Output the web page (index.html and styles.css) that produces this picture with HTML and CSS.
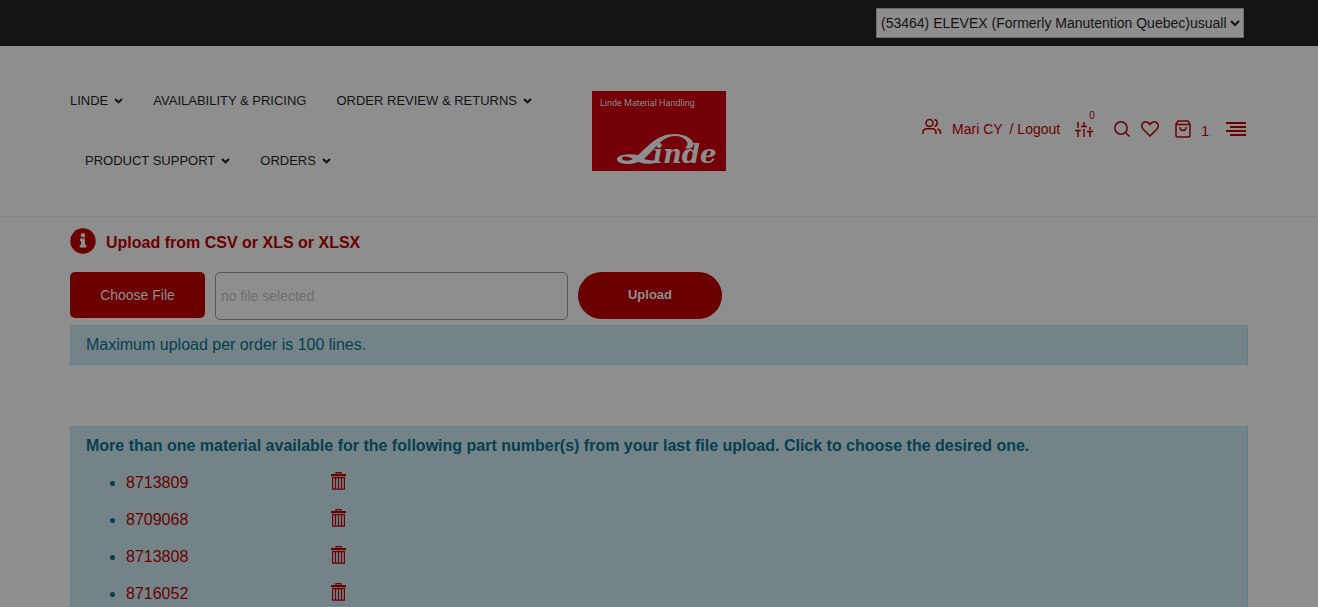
FILE: index.html
```html
<!DOCTYPE html>
<html lang="en">
<head>
<meta charset="utf-8">
<meta name="viewport" content="width=device-width, initial-scale=1">
<title>Linde Material Handling - File upload</title>
<link rel="stylesheet" href="styles.css">
</head>
<body>
<svg class="sprite" aria-hidden="true">
  <symbol id="chevron" viewBox="0 0 9 6"><path d="M1 1l3.5 3.3L8 1" fill="none" stroke="currentColor" stroke-width="2"/></symbol>
  <symbol id="trash" viewBox="0 0 15 18"><path d="M5 2.5V.7h5v1.8" fill="none" stroke="currentColor" stroke-width="1.2"/><path d="M0 2h15v2.2H0z" fill="currentColor"/><path d="M1.6 5.6h11.8v11.6H1.6zM4.5 5.5v11.5M7.5 5.5v11.5M10.5 5.5v11.5" fill="none" stroke="currentColor" stroke-width="1.2"/></symbol>
</svg>
<div class="topbar">
  <select class="account" aria-label="Account">
    <option>(53464) ELEVEX (Formerly Manutention Quebec)usuall</option>
  </select>
</div>
<header class="header">
  <nav class="nav" aria-label="Main">
    <a class="nav-item" href="#">LINDE <svg class="chevron"><use href="#chevron"/></svg></a>
    <a class="nav-item" href="#">AVAILABILITY &amp; PRICING</a>
    <a class="nav-item" href="#">ORDER REVIEW &amp; RETURNS <svg class="chevron"><use href="#chevron"/></svg></a>
    <a class="nav-item" href="#">PRODUCT SUPPORT <svg class="chevron"><use href="#chevron"/></svg></a>
    <a class="nav-item" href="#">ORDERS <svg class="chevron"><use href="#chevron"/></svg></a>
  </nav>
  <a class="logo" href="#" aria-label="Linde Material Handling">
    <svg width="134" height="80" viewBox="0 0 134 80">
      <rect width="134" height="80" fill="#720006"/>
      <text class="logo-caption" x="8" y="15">Linde Material Handling</text>
      <g fill="#8e8e8e">
        <path d="M46 64L58 53C66 46 74 43 82 43C93 43 103 48 101 55C100 58 96 58 93 57C97 54 96 50 91 47C84 43 76 46 71 49C67 52 64 55 61 59L52 68C56 69 60 70 65 69L63 72C55 74 50 72 46 71C40 74 27 74 25 69C24 64 36 62 46 64ZM41 68C36 65 30 65 30 67C30 70 36 71 41 68Z" fill-rule="evenodd"/>
      </g>
      <text class="logo-word" x="61" y="72">inde</text>
    </svg>
  </a>
  <div class="tools">
    <a class="tool user" href="#" aria-label="Account"><svg width="20" height="18" viewBox="0 0 20 18" fill="none" stroke="currentColor" stroke-width="1.500"><circle cx="7.500" cy="5" r="3.500"/><path d="M1 16v-1.500C1 12 2.500 10.700 5 10.700h5c2.500 0 4 1.300 4 3.800V16M12.500 1.600c3.600.9 3.600 5.900 0 6.800M15.500 11c2 .5 3 1.700 3 3.600V16"/></svg></a>
    <a class="tool name" href="#">Mari CY</a>
    <a class="tool logout" href="#">/ Logout</a>
    <a class="tool compare" href="#" aria-label="Compare"><svg width="18" height="17" viewBox="0 0 18 17" fill="none" stroke="currentColor" stroke-width="1.500"><path d="M3 1v6M0 9.500h6M3 9.500V16M9 1v4.500M6 5.500h6M9 8v8M15 6v3M12 10.500h6M15 10.500V16"/></svg><span class="count">0</span></a>
    <a class="tool search" href="#" aria-label="Search"><svg width="16" height="16" viewBox="0 0 16 16" fill="none" stroke="currentColor" stroke-width="1.500"><circle cx="7" cy="7" r="6.200"/><path d="M11.500 11.500L15.500 15.500"/></svg></a>
    <a class="tool heart" href="#" aria-label="Wish list"><svg width="18" height="16" viewBox="0 0 18 16" fill="none" stroke="currentColor" stroke-width="1.500"><path d="M9 15L2.200 8.200C.3 6.200.4 3.400 2.100 1.900C4 .2 6.900.7 8.200 2.500L9 3.500L9.800 2.500C11.100.7 14 .2 15.900 1.900C17.600 3.400 17.700 6.200 15.800 8.200Z"/></svg></a>
    <a class="tool bag" href="#"><svg width="16" height="18" viewBox="0 0 16 18" fill="none" stroke="currentColor" stroke-width="1.500"><path d="M3 1h10l2 3v11.200c0 1-.6 1.800-1.700 1.800H2.700C1.600 17 1 16.200 1 15.200V4zM1 4.500h14M5 7c0 4.600 6 4.600 6 0"/></svg><span class="bag-count">1</span></a>
    <button class="tool menu" type="button" aria-label="Menu"><svg width="20" height="14" viewBox="0 0 20 14" fill="none" stroke="currentColor" stroke-width="2"><path d="M0 1h20M4 5h16M0 9h20M4 13h16"/></svg></button>
  </div>
</header>
<main class="main">
  <h1 class="title"><svg width="26" height="26" viewBox="0 0 26 26"><circle cx="13" cy="13" r="12.700" fill="currentColor"/><circle cx="13" cy="7.200" r="2.200" fill="#8e8e8e"/><path d="M10 10.500h5v6.500h1.300v2.500H9.700V17H11v-4h-1z" fill="#8e8e8e"/></svg><span>Upload from CSV or XLS or XLSX</span></h1>
  <form class="upload">
    <button class="choose" type="button">Choose File</button>
    <input class="filename" type="text" placeholder="no file selected" aria-label="Selected file" readonly>
    <button class="submit" type="button">Upload</button>
  </form>
  <p class="alert limit">Maximum upload per order is 100 lines.</p>
  <section class="alert materials">
    <h2 class="materials-title">More than one material available for the following part number(s) from your last file upload. Click to choose the desired one.</h2>
    <ul class="parts">
      <li><div class="part"><a href="#">8713809</a><button type="button" aria-label="Delete 8713809"><svg width="15" height="18"><use href="#trash"/></svg></button></div></li>
      <li><div class="part"><a href="#">8709068</a><button type="button" aria-label="Delete 8709068"><svg width="15" height="18"><use href="#trash"/></svg></button></div></li>
      <li><div class="part"><a href="#">8713808</a><button type="button" aria-label="Delete 8713808"><svg width="15" height="18"><use href="#trash"/></svg></button></div></li>
      <li><div class="part"><a href="#">8716052</a><button type="button" aria-label="Delete 8716052"><svg width="15" height="18"><use href="#trash"/></svg></button></div></li>
    </ul>
  </section>
</main>
</body>
</html>
```
FILE: styles.css
```css
* { box-sizing: border-box; }
html { overflow: hidden; }
body { margin: 0; background: #8e8e8e; color: #131313; font: 16px/24px "Liberation Sans", Arial, sans-serif; }
a { color: #6a0000; text-decoration: none; }
button { border: 0; padding: 0; background: none; color: #6a0000; font: inherit; }
svg { display: block; flex: none; }
.sprite { position: absolute; width: 0; height: 0; }

.topbar { display: flex; justify-content: flex-end; padding: 8px 74px; background: #131313; }
.account { width: 368px; height: 30px; border: 1px solid #6b6b6b; background: #8e8e8e; color: #131313; font: 14px "Liberation Sans", Arial, sans-serif; }

.header { display: grid; grid-template-columns: 1fr auto 1fr; align-items: center; padding: 25px 70px; border-bottom: 1px solid #848484; }
.nav { display: flex; flex-wrap: wrap; }
.nav-item { display: flex; align-items: center; gap: 6px; margin: 0 15px; color: #131313; font-size: 13px; line-height: 60px; }
.nav-item:first-child { margin-left: 0; }
.chevron { width: 9px; height: 6px; }
.logo-caption { fill: #8e8e8e; font: 9px Roboto, sans-serif; }
.logo-word { fill: #8e8e8e; font: italic bold 26px "DejaVu Serif", serif; }

.tools { display: flex; align-items: center; justify-content: flex-end; padding: 0 2px 4px 0; font-size: 14px; line-height: 20px; }
.tool { display: flex; align-items: center; }
.user { margin-right: 10px; padding-bottom: 4px; }
.name { margin-right: 7px; }
.logout { margin-right: 15px; }
.compare { position: relative; margin-right: 21px; }
.count { position: absolute; left: 14px; top: -11px; font-size: 10px; line-height: 12px; }
.search { margin-right: 11px; }
.heart { margin-right: 16px; }
.bag { gap: 10px; margin-right: 17px; }
.bag-count { padding-top: 4px; }

.main { padding: 11px 70px 0; }
.title { display: flex; align-items: flex-end; gap: 10px; margin: 0 0 18px; color: #6a0000; font-size: 16px; line-height: 22px; }
.upload { display: flex; align-items: flex-start; gap: 10px; margin-bottom: 5px; }
.choose { width: 135px; height: 46px; border-radius: 5px; background: #6a0000; color: #8e8e8e; font-size: 14px; }
.filename { width: 353px; height: 48px; padding: 0 5px; border: 1px solid #555; border-radius: 5px; background: transparent; font: 14px "Liberation Sans", Arial, sans-serif; }
.filename::placeholder { color: #6f6f6f; }
.submit { width: 144px; height: 47px; padding-bottom: 2px; border-radius: 24px; background: #6a0000; color: #8e8e8e; font-size: 13px; font-weight: bold; }
.alert { border: 1px solid #5f8288; background: #748387; color: #06404f; }
.limit { margin: 0 0 61px; padding: 7px 15px; }
.materials { padding: 7px 15px; }
.materials-title { margin: 0 0 6px; font-size: 16px; line-height: 24px; }
.parts { margin: 0; padding-left: 40px; line-height: 37px; }
.part { display: grid; grid-template-columns: 205px auto; justify-content: start; align-items: center; }
.part button { padding-bottom: 4px; }
```
